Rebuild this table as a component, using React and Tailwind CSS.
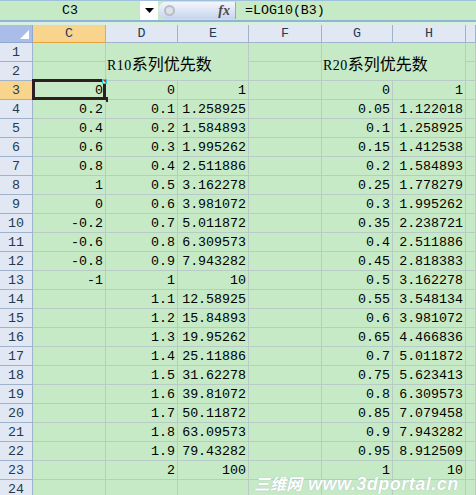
import React from "react";

const mono = "font-['Liberation_Mono','Noto_Sans_CJK_SC',monospace]";

// rows 3..23 : C, D, E, G, H
const data = [
  ["0", "0", "1", "0", "1"],
  ["0.2", "0.1", "1.258925", "0.05", "1.122018"],
  ["0.4", "0.2", "1.584893", "0.1", "1.258925"],
  ["0.6", "0.3", "1.995262", "0.15", "1.412538"],
  ["0.8", "0.4", "2.511886", "0.2", "1.584893"],
  ["1", "0.5", "3.162278", "0.25", "1.778279"],
  ["0", "0.6", "3.981072", "0.3", "1.995262"],
  ["-0.2", "0.7", "5.011872", "0.35", "2.238721"],
  ["-0.6", "0.8", "6.309573", "0.4", "2.511886"],
  ["-0.8", "0.9", "7.943282", "0.45", "2.818383"],
  ["-1", "1", "10", "0.5", "3.162278"],
  ["", "1.1", "12.58925", "0.55", "3.548134"],
  ["", "1.2", "15.84893", "0.6", "3.981072"],
  ["", "1.3", "19.95262", "0.65", "4.466836"],
  ["", "1.4", "25.11886", "0.7", "5.011872"],
  ["", "1.5", "31.62278", "0.75", "5.623413"],
  ["", "1.6", "39.81072", "0.8", "6.309573"],
  ["", "1.7", "50.11872", "0.85", "7.079458"],
  ["", "1.8", "63.09573", "0.9", "7.943282"],
  ["", "1.9", "79.43282", "0.95", "8.912509"],
  ["", "2", "100", "1", "10"],
];

const cell = "border-r border-b border-[#b8cbc6] bg-[#c5eac5] text-right pr-[2px] leading-[19px] whitespace-nowrap text-[13.3px] text-black";
const rowHead = "border-r border-b border-[#9fb4cc] bg-[#e1e8f3] text-center leading-[19px] text-[13.3px] text-[#1f3b55]";
const colHead = "border-r border-b border-[#9fb4cc] bg-[#e1e8f3] text-center leading-[18px] text-[13.3px] text-[#1f3b55]";
const merged = "col-span-2 row-span-2 border-r border-b border-[#b8cbc6] bg-[#c5eac5] flex items-center pl-[1px] pt-[4px] text-black whitespace-nowrap";

function Title({ code }) {
  return (
    <div className="flex items-baseline">
      <span className="text-[14px] font-['Liberation_Serif',serif] tracking-[0.5px]">{code}</span>
      <span className="text-[16px] font-['Noto_Sans_CJK_SC',sans-serif]">系列优先数</span>
    </div>
  );
}

function FormulaBar() {
  return (
    <div className="flex h-[20px] border-t border-[#9fc0dc] bg-[#c5eac5]">
      <div className={`w-[140px] flex items-center justify-center text-[13.3px] text-black ${mono}`}>C3</div>
      <div className="w-[18px] bg-white flex items-center justify-center">
        <svg width="9" height="5" viewBox="0 0 9 5"><path d="M0 0h9L4.5 5z" fill="#000" /></svg>
      </div>
      <div className="w-[78px] my-[1px] rounded-l-full bg-gradient-to-b from-[#f4f6fb] to-[#c8d4ee] flex items-center justify-between pl-[6px] pr-[5px] border-r border-[#8fa8c8]">
        <div className="w-[11px] h-[11px] rounded-full border-2 border-[#b8bcc4] bg-[#dde2ea]" />
        <span className="font-['Liberation_Serif',serif] italic font-bold text-[14px] text-[#4a4a4a] leading-none">fx</span>
      </div>
      <div className={`flex-1 pl-[9px] text-[13.3px] leading-[19px] text-black ${mono}`}>=LOG10(B3)</div>
    </div>
  );
}

export default function App() {
  const rows = [];
  data.forEach((r, i) => {
    const n = i + 3;
    rows.push(<div key={`h${n}`} className={rowHead + (n === 3 ? " !bg-[#f8d48c] !border-[#e6a84a]" : "")}>{n}</div>);
    rows.push(
      <div key={`c${n}`} className={cell + " relative"}>
        {r[0]}
        {n === 3 && (
          <div className="absolute -left-[1px] -top-[2px] w-[74px] h-[21px] border-[3px] border-[#2e1e22]">
            <div className="absolute right-[-4px] top-[-3px] w-[5px] h-[5px] border border-[#19d0e0] bg-[#c5eac5]">
              <div className="absolute right-0 top-0 w-0 h-0 border-l-[3px] border-l-transparent border-t-[3px] border-t-[#e02020]" />
            </div>
            <div className="absolute right-[-5px] bottom-[-5px] w-[5px] h-[5px] bg-[#2e1e22]" />
          </div>
        )}
      </div>
    );
    rows.push(<div key={`d${n}`} className={cell}>{r[1]}</div>);
    rows.push(<div key={`e${n}`} className={cell}>{r[2]}</div>);
    rows.push(<div key={`f${n}`} className={cell}></div>);
    rows.push(<div key={`g${n}`} className={cell}>{r[3]}</div>);
    rows.push(<div key={`hh${n}`} className={cell}>{r[4]}</div>);
    rows.push(<div key={`i${n}`} className={cell}></div>);
  });

  return (
    <div className={`relative w-[476px] h-[495px] overflow-hidden bg-[#c5eac5] ${mono}`}>
      <FormulaBar />
      <div className="h-[2px] bg-[#8fb4d8]" />
      <div className="h-[3px] bg-[#d8efe0]" />
      <div className="grid grid-cols-[33px_73px_72px_71px_73px_71px_73px_1fr] grid-rows-[18px] auto-rows-[19px]">
        {/* column headers */}
        <div className="relative border-r border-b border-[#8fa8d0] bg-[#a9bde8]">
          <div className="absolute right-[3px] bottom-[3px] w-0 h-0 border-l-[9px] border-l-transparent border-b-[9px] border-b-white" />
        </div>
        <div className={colHead + " !bg-[#f8d48c] !border-b-[#e8a23c]"}>C</div>
        <div className={colHead}>D</div>
        <div className={colHead}>E</div>
        <div className={colHead}>F</div>
        <div className={colHead}>G</div>
        <div className={colHead}>H</div>
        <div className={colHead}></div>

        {/* rows 1-2 with merged title cells */}
        <div className={rowHead}>1</div>
        <div className={cell}></div>
        <div className={merged}><Title code="R10" /></div>
        <div className={cell}></div>
        <div className={merged}><Title code="R20" /></div>
        <div className={cell}></div>
        <div className={rowHead}>2</div>
        <div className={cell}></div>
        <div className={cell}></div>
        <div className={cell}></div>

        {rows}

        <div className={rowHead}>24</div>
        <div className={cell}></div>
        <div className={cell}></div>
        <div className={cell}></div>
        <div className={cell}></div>
        <div className={cell}></div>
        <div className={cell}></div>
        <div className={cell}></div>
      </div>

      <div className="absolute left-[254px] top-[474px] flex items-baseline gap-[6px] text-white italic font-bold leading-[18px] [text-shadow:0_0_1px_#9ab]">
        <span className="text-[16px] font-['Noto_Sans_CJK_SC',sans-serif]">三维网</span>
        <span className="text-[18px] font-['Liberation_Sans',sans-serif] tracking-[0.5px]">www.3dportal.cn</span>
      </div>
    </div>
  );
}
